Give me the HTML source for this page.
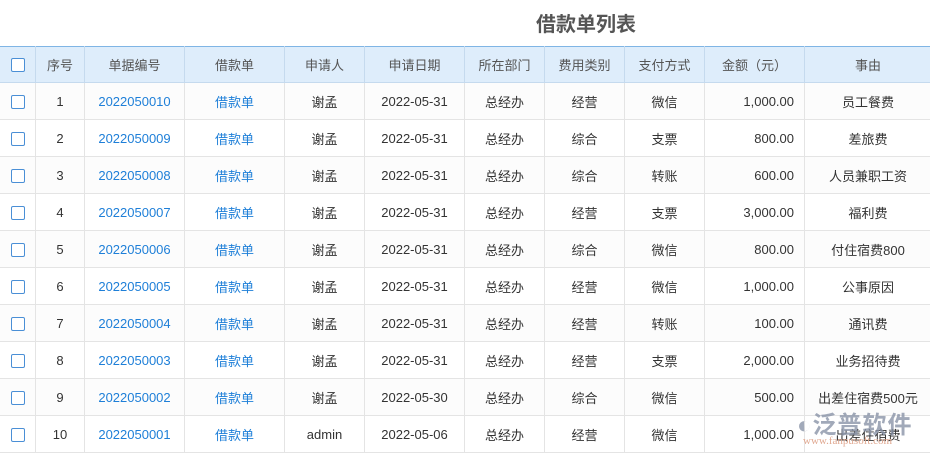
<!DOCTYPE html><html><head><meta charset="utf-8"><style>
body{margin:0;width:930px;height:455px;overflow:hidden;background:#fff;font-family:"Liberation Sans","Noto Sans CJK SC",sans-serif;font-size:13px;color:#333}
h1{position:absolute;left:0;width:1172px;top:8px;margin:0;text-align:center;font-size:20px;font-weight:bold;color:#555}
table{position:absolute;top:46px;left:-1px;border-collapse:collapse;table-layout:fixed;width:932px}
th{background:#deedfb;color:#555;font-weight:normal;height:35px;padding:0;border:1px solid #c5daee;border-top:1px solid #7fb5e5}
td{height:36px;border:1px solid #e4e4e4;text-align:center;padding:0}
tr:nth-child(even) td{background:#fcfcfc}
.b{color:#1e7fd8}.r{text-align:right;padding-right:10px}
.cb{display:inline-block;width:12px;height:12px;border:1px solid #4a8fd6;border-radius:2px;background:#fff;vertical-align:middle}
.wm{position:absolute;left:797px;top:405px;color:#8a94a8;font-size:24px;font-weight:bold;letter-spacing:1px;opacity:.8}
.wm2{position:absolute;left:803px;top:435px;color:#e0a890;font-size:11px;font-family:"Liberation Serif",serif}
</style></head><body>
<h1>借款单列表</h1>
<table>
<colgroup><col style="width:36px"><col style="width:49px"><col style="width:100px"><col style="width:100px"><col style="width:80px"><col style="width:100px"><col style="width:80px"><col style="width:80px"><col style="width:80px"><col style="width:100px"><col style="width:127px"></colgroup>
<tr><th><span class="cb"></span></th><th>序号</th><th>单据编号</th><th>借款单</th><th>申请人</th><th>申请日期</th><th>所在部门</th><th>费用类别</th><th>支付方式</th><th>金额（元）</th><th>事由</th></tr>
<tr><td><span class="cb"></span></td><td>1</td><td class="b">2022050010</td><td class="b">借款单</td><td>谢孟</td><td>2022-05-31</td><td>总经办</td><td>经营</td><td>微信</td><td class="r">1,000.00</td><td>员工餐费</td></tr>
<tr><td><span class="cb"></span></td><td>2</td><td class="b">2022050009</td><td class="b">借款单</td><td>谢孟</td><td>2022-05-31</td><td>总经办</td><td>综合</td><td>支票</td><td class="r">800.00</td><td>差旅费</td></tr>
<tr><td><span class="cb"></span></td><td>3</td><td class="b">2022050008</td><td class="b">借款单</td><td>谢孟</td><td>2022-05-31</td><td>总经办</td><td>综合</td><td>转账</td><td class="r">600.00</td><td>人员兼职工资</td></tr>
<tr><td><span class="cb"></span></td><td>4</td><td class="b">2022050007</td><td class="b">借款单</td><td>谢孟</td><td>2022-05-31</td><td>总经办</td><td>经营</td><td>支票</td><td class="r">3,000.00</td><td>福利费</td></tr>
<tr><td><span class="cb"></span></td><td>5</td><td class="b">2022050006</td><td class="b">借款单</td><td>谢孟</td><td>2022-05-31</td><td>总经办</td><td>综合</td><td>微信</td><td class="r">800.00</td><td>付住宿费800</td></tr>
<tr><td><span class="cb"></span></td><td>6</td><td class="b">2022050005</td><td class="b">借款单</td><td>谢孟</td><td>2022-05-31</td><td>总经办</td><td>经营</td><td>微信</td><td class="r">1,000.00</td><td>公事原因</td></tr>
<tr><td><span class="cb"></span></td><td>7</td><td class="b">2022050004</td><td class="b">借款单</td><td>谢孟</td><td>2022-05-31</td><td>总经办</td><td>经营</td><td>转账</td><td class="r">100.00</td><td>通讯费</td></tr>
<tr><td><span class="cb"></span></td><td>8</td><td class="b">2022050003</td><td class="b">借款单</td><td>谢孟</td><td>2022-05-31</td><td>总经办</td><td>经营</td><td>支票</td><td class="r">2,000.00</td><td>业务招待费</td></tr>
<tr><td><span class="cb"></span></td><td>9</td><td class="b">2022050002</td><td class="b">借款单</td><td>谢孟</td><td>2022-05-30</td><td>总经办</td><td>综合</td><td>微信</td><td class="r">500.00</td><td>出差住宿费500元</td></tr>
<tr><td><span class="cb"></span></td><td>10</td><td class="b">2022050001</td><td class="b">借款单</td><td>admin</td><td>2022-05-06</td><td>总经办</td><td>经营</td><td>微信</td><td class="r">1,000.00</td><td>出差住宿费</td></tr>
</table>
<div class="wm">◐泛普软件</div>
<div class="wm2">www.fanpusoft.com</div>
</body></html>
